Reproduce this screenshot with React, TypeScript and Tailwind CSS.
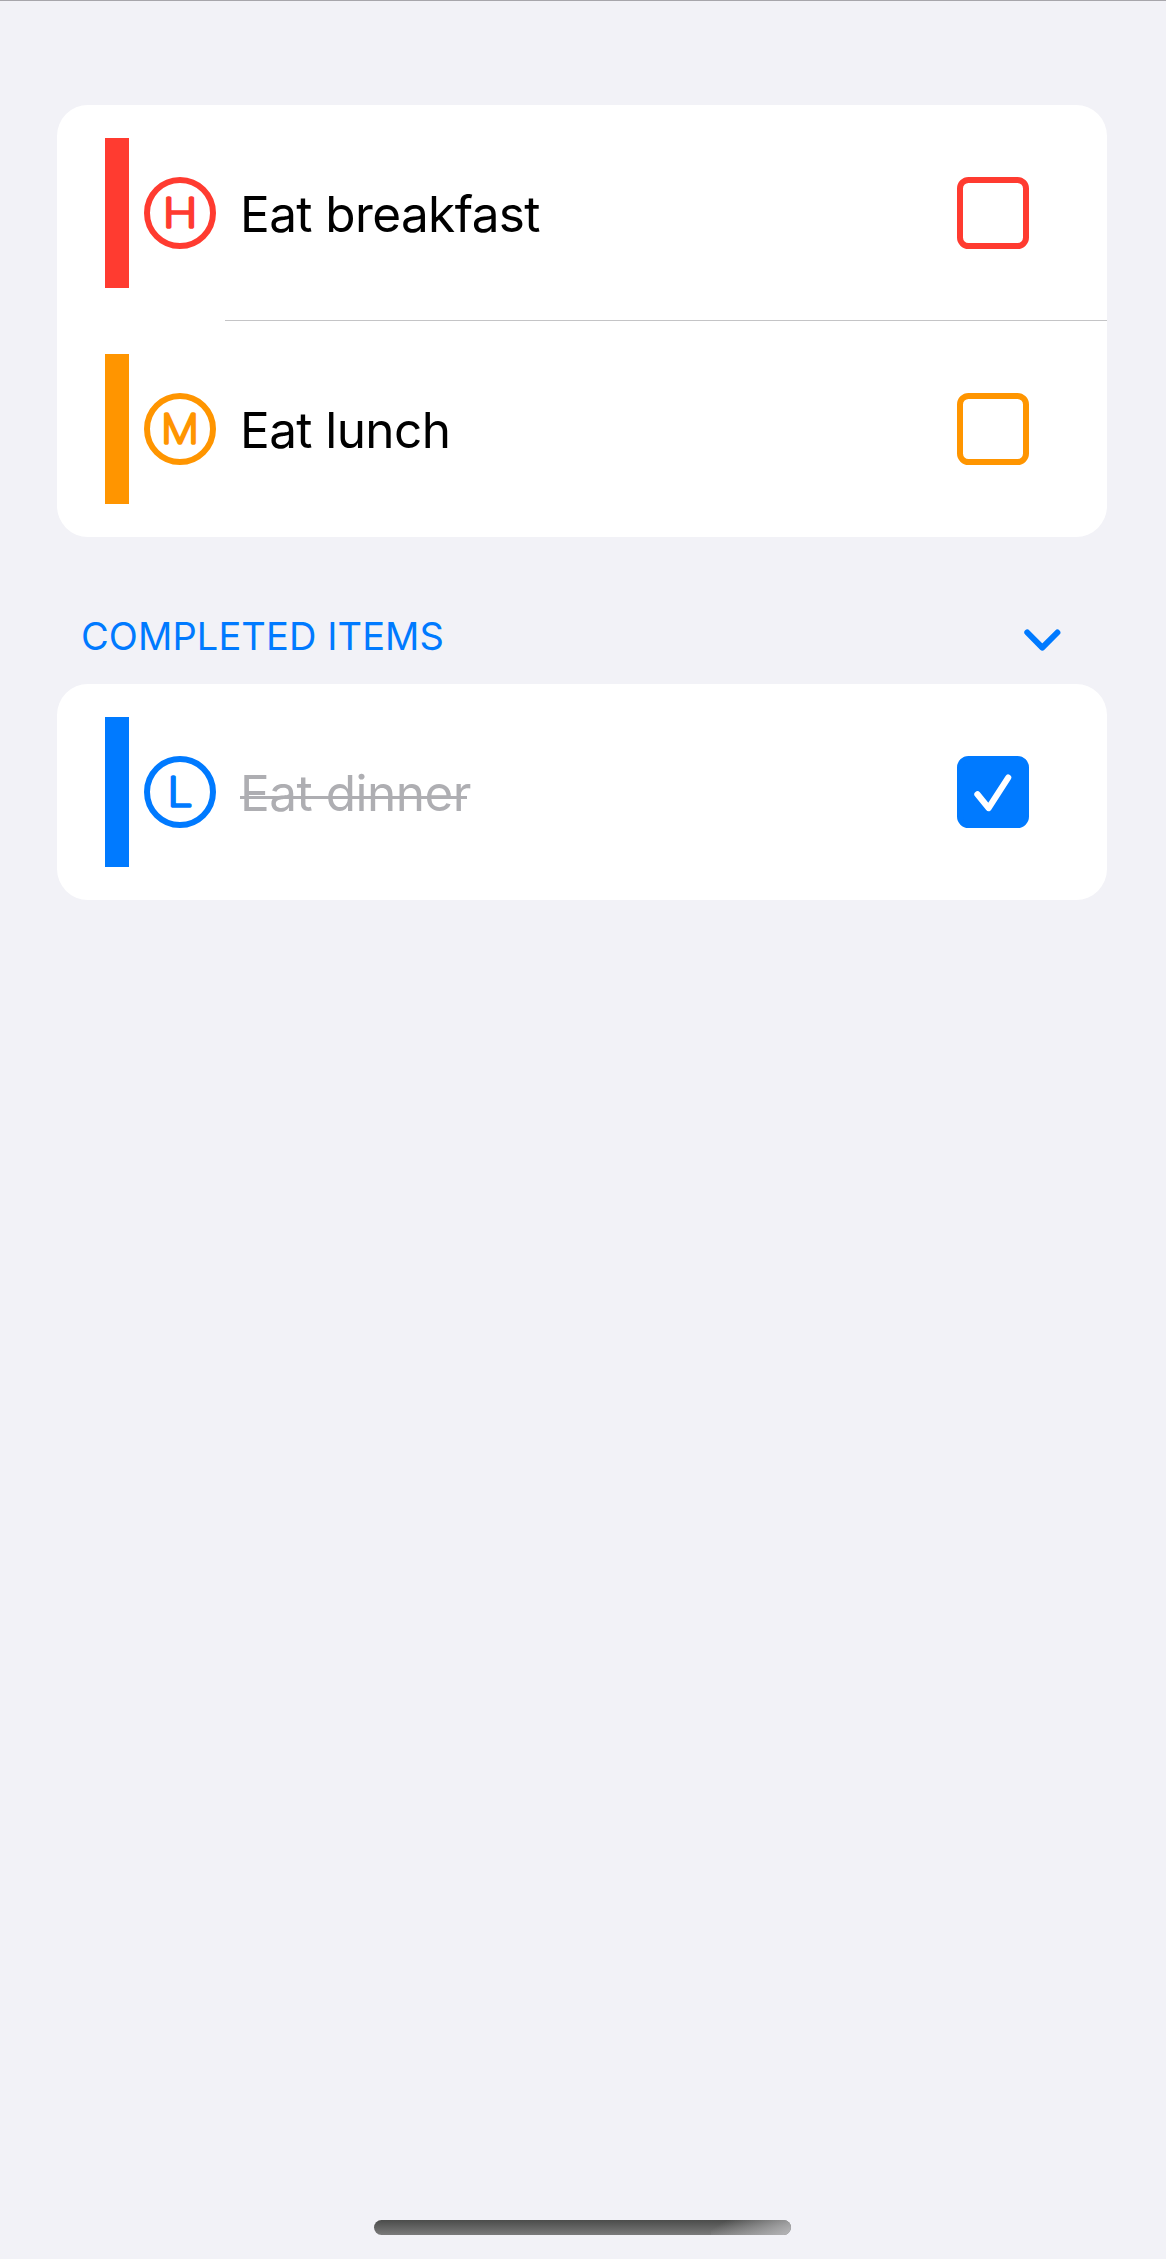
type Task = {
  title: string;
  letter: string;
  color: string;
  bar: string;
  text: string;
  stretch: number;
  done?: boolean;
};

const open: Task[] = [
  { title: "Eat breakfast", letter: "H", color: "#ff3b30", bar: "bg-[#ff3b30]", text: "tracking-[-0.6px]", stretch: 1.18 },
  { title: "Eat lunch", letter: "M", color: "#ff9500", bar: "bg-[#ff9500]", text: "tracking-[-0.6px]", stretch: 1.06 },
];

const completed: Task[] = [
  { title: "Eat dinner", letter: "L", color: "#007aff", bar: "bg-[#007aff]", text: "tracking-[-0.5px]", stretch: 1.1, done: true },
];

function Priority({ task }: { task: Task }) {
  return (
    <svg width="72" height="72" viewBox="0 0 72 72" className="ml-[15px] shrink-0">
      <circle cx="36" cy="36" r="33" fill="none" stroke={task.color} strokeWidth="6" />
      <text
        transform={`translate(36 49.8) scale(${task.stretch} 1)`}
        textAnchor="middle"
        fill={task.color}
        stroke={task.color}
        strokeWidth="3.7"
        strokeLinejoin="round"
        className="font-['Inter',sans-serif] text-[39.5px] font-thin"
      >
        {task.letter}
      </text>
    </svg>
  );
}

function Checkbox({ task }: { task: Task }) {
  return (
    <svg width="72" height="72" viewBox="0 0 72 72" fill="none" className="mr-[78px] ml-auto shrink-0">
      <rect x="3" y="3" width="66" height="66" rx="8.5" stroke={task.color} strokeWidth="6" fill={task.done ? task.color : "none"} />
      {task.done && (
        <path d="M20.4 38.3 31.6 52 51.2 21.6" stroke="#fff" strokeWidth="6.2" strokeLinecap="round" strokeLinejoin="round" />
      )}
    </svg>
  );
}

function Row({ task, divider }: { task: Task; divider?: boolean }) {
  return (
    <div className="relative flex h-[216px] items-center pl-12">
      <div className={`h-[150px] w-6 shrink-0 ${task.bar}`} />
      <Priority task={task} />
      <span
        className={`relative ml-6 pt-[2px] text-[49.5px] leading-[60px] whitespace-nowrap ${task.text} ${task.done ? "text-[#aeaeb2]" : "text-black"}`}
      >
        {task.title}
        {task.done && <span className="absolute top-[35px] left-0 h-[3px] w-[227px] bg-[#aeaeb2]" />}
      </span>
      <Checkbox task={task} />
      {divider && <div className="absolute right-0 bottom-0 left-[168px] h-px bg-[#c4c4c6]" />}
    </div>
  );
}

export default function App() {
  return (
    <main className="flex h-[2259px] w-[1166px] flex-col border-t border-[#a7a6ab] bg-[#f2f2f7] pt-[104px] pr-[59px] pl-[57px] font-['Inter',sans-serif]">
      <section className="rounded-[31px] bg-white">
        {open.map((t, i) => (
          <Row key={t.title} task={t} divider={i < open.length - 1} />
        ))}
      </section>
      <header className="flex h-[147px] items-center justify-between pt-[50px] pr-[43px] pl-6">
        <h2 className="text-[38px] leading-[46px] tracking-[0.1px] text-[#007aff]">COMPLETED ITEMS</h2>
        <svg width="44" height="30" viewBox="0 0 44 30" fill="none" className="mt-2">
          <path d="M7.3 7.5 22.3 22.6 37.4 7.5" stroke="#007aff" strokeWidth="6" strokeLinecap="round" strokeLinejoin="round" />
        </svg>
      </header>
      <section className="rounded-[31px] bg-white">
        {completed.map((t) => (
          <Row key={t.title} task={t} />
        ))}
      </section>
      <div className="mt-auto mb-6 ml-[317px] h-[15px] w-[417px] overflow-hidden rounded-full bg-linear-to-b from-[#4b4c4b] to-[#7b7b7b]">
        <div className="ml-auto h-full w-[80px] bg-[linear-gradient(149deg,transparent_15%,#b6b6b8_100%)]" />
      </div>
    </main>
  );
}
